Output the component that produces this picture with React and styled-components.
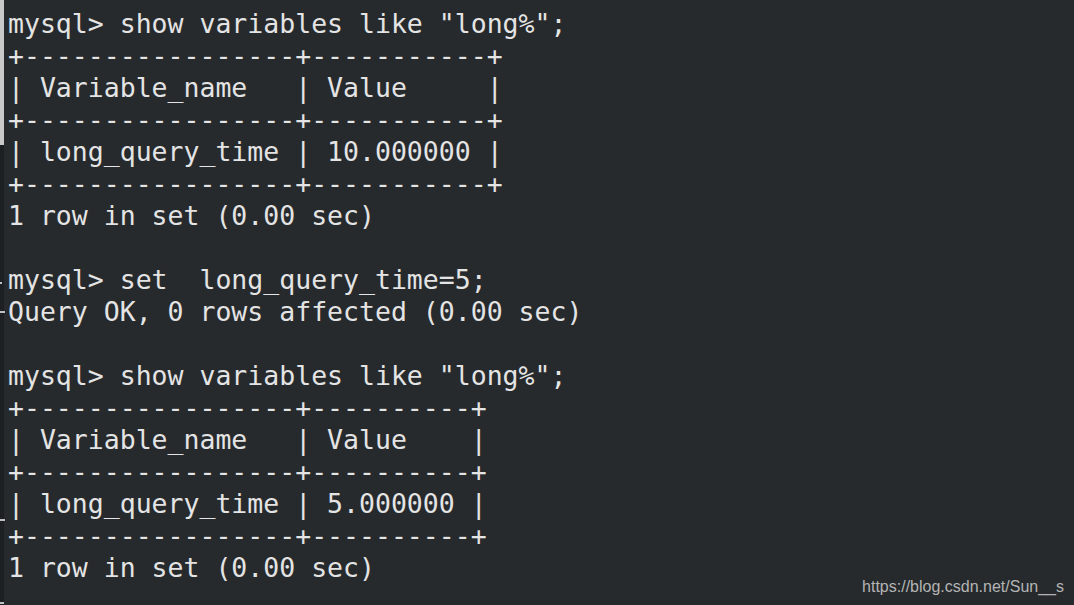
import React from 'react';
import styled, { createGlobalStyle } from 'styled-components';

const GlobalStyle = createGlobalStyle`
  html, body {
    margin: 0;
    padding: 0;
    background: #262a2d;
    overflow: hidden;
  }
`;

const Screen = styled.div`
  position: relative;
  display: flex;
  flex-direction: row;
  width: 1074px;
  height: 605px;
  background: #262a2d;
  overflow: hidden;
`;

const Gutter = styled.div`
  display: flex;
  flex-direction: column;
  width: 5px;
  flex-shrink: 0;
`;

const GutterThumb = styled.div`
  width: 4px;
  height: 145px;
  background: #c9c9c9;
`;

const GutterTrack = styled.div`
  position: relative;
  width: 4px;
  flex: 1;
  background: #1d2022;
`;

// little leftover marks on the scroll track
const Tick = styled.span`
  position: absolute;
  left: 0;
  top: ${props => props.top}px;
  width: ${props => props.w}px;
  height: 2px;
  background: #bfbfbf;
`;

const Console = styled.pre`
  margin: 0;
  padding: 8px 0 0 3px;
  font-family: "DejaVu Sans Mono", "Liberation Mono", monospace;
  font-size: 26.5px;
  line-height: 32px;
  color: #e4e4e4;
  white-space: pre;
`;

const Line = styled.div`
  height: 32px;
`;

const Watermark = styled.div`
  position: absolute;
  right: 10px;
  bottom: 9px;
  font-family: "Liberation Sans", Arial, sans-serif;
  font-size: 16px;
  color: #b4b4b4;
`;

const lines = [
  'mysql> show variables like "long%";',
  '+-----------------+-----------+',
  '| Variable_name   | Value     |',
  '+-----------------+-----------+',
  '| long_query_time | 10.000000 |',
  '+-----------------+-----------+',
  '1 row in set (0.00 sec)',
  '',
  'mysql> set  long_query_time=5;',
  'Query OK, 0 rows affected (0.00 sec)',
  '',
  'mysql> show variables like "long%";',
  '+-----------------+----------+',
  '| Variable_name   | Value    |',
  '+-----------------+----------+',
  '| long_query_time | 5.000000 |',
  '+-----------------+----------+',
  '1 row in set (0.00 sec)',
];

function App() {
  return (
    <>
      <GlobalStyle />
      <Screen>
        <Gutter>
          <GutterThumb />
          <GutterTrack>
            <Tick top={137} w={2} />
            <Tick top={166} w={5} />
            <Tick top={374} w={5} />
            <Tick top={457} w={4} />
          </GutterTrack>
        </Gutter>
        <Console>
          {lines.map((text, i) => (
            <Line key={i}>{text}</Line>
          ))}
        </Console>
        <Watermark>https://blog.csdn.net/Sun__s</Watermark>
      </Screen>
    </>
  );
}

export default App;
